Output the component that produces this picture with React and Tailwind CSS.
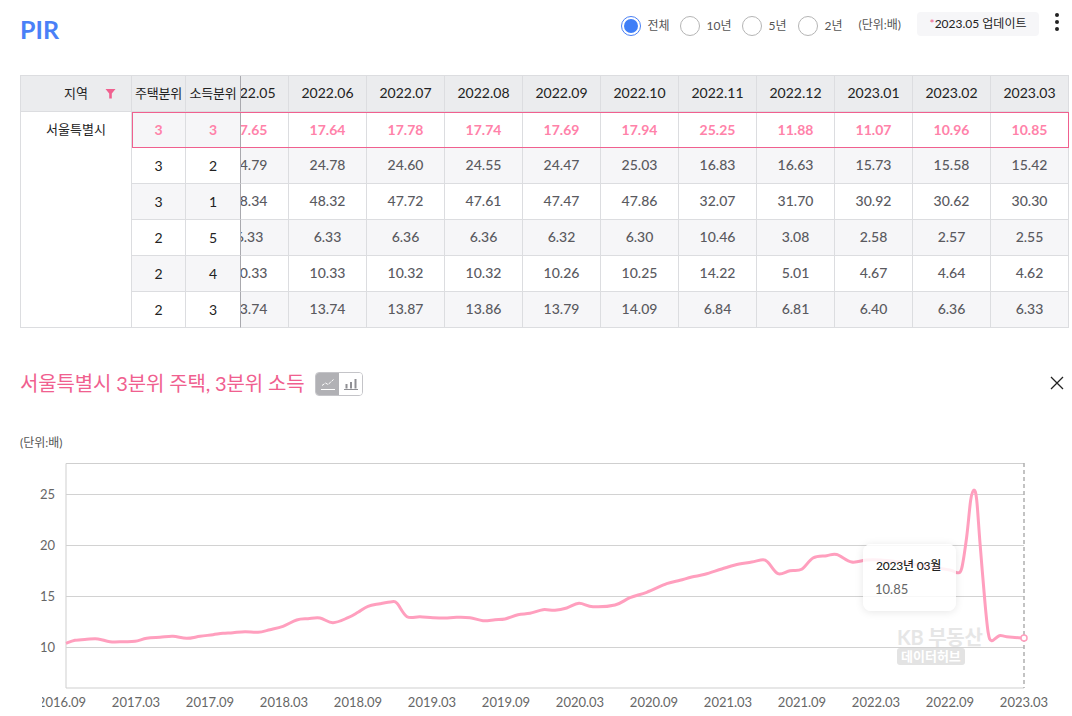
import React from 'react';

const FONT = 'font-["Lato","Noto_Sans_CJK_KR",sans-serif]';

const months = ['2022.05', '2022.06', '2022.07', '2022.08', '2022.09', '2022.10', '2022.11', '2022.12', '2023.01', '2023.02', '2023.03'];

const rows = [
  { house: 3, income: 3, values: ['17.65', '17.64', '17.78', '17.74', '17.69', '17.94', '25.25', '11.88', '11.07', '10.96', '10.85'] },
  { house: 3, income: 2, values: ['24.79', '24.78', '24.60', '24.55', '24.47', '25.03', '16.83', '16.63', '15.73', '15.58', '15.42'] },
  { house: 3, income: 1, values: ['48.34', '48.32', '47.72', '47.61', '47.47', '47.86', '32.07', '31.70', '30.92', '30.62', '30.30'] },
  { house: 2, income: 5, values: ['6.33', '6.33', '6.36', '6.36', '6.32', '6.30', '10.46', '3.08', '2.58', '2.57', '2.55'] },
  { house: 2, income: 4, values: ['10.33', '10.33', '10.32', '10.32', '10.26', '10.25', '14.22', '5.01', '4.67', '4.64', '4.62'] },
  { house: 2, income: 3, values: ['13.74', '13.74', '13.87', '13.86', '13.79', '14.09', '6.84', '6.81', '6.40', '6.36', '6.33'] },
];

const linePoints = [
  [66, 643.3], [75, 640.3], [86.7, 639.3], [98, 639], [110, 641.7], [123, 641.7], [135, 641.3], [146.7, 638.3],
  [160, 637.3], [173, 636.3], [186.7, 638.3], [200, 636.3], [213, 634.7], [223, 633.3], [233, 632.7], [245, 631.7],
  [258, 632.3], [270, 629.7], [283, 626.3], [296.7, 620], [308, 618.7], [320, 618], [333, 622.7], [348, 617.7],
  [358, 612.3], [368, 606.3], [380, 603.7], [392, 601.7], [397, 603.3], [407, 616.7], [420, 616.7], [433, 617.7],
  [445, 618], [456.7, 617.3], [470, 617.7], [483, 620.7], [495, 619.7], [505, 619], [518, 614.7], [530, 613.3],
  [543, 609.7], [555, 610.3], [566.7, 608], [579, 603.3], [593, 606.7], [615, 605], [630, 597.7], [646.7, 592.3],
  [666.7, 583.7], [680, 580.3], [691.7, 577], [705, 574.3], [721.7, 569], [735, 565], [751.7, 562], [763, 559.7],
  [768, 562.3], [778, 573.7], [790, 570.7], [801.7, 569.3], [813, 558], [826.7, 555.7], [836.7, 554.5], [851.7, 562],
  [866.7, 560], [880, 560], [900, 562], [925, 566], [950, 570], [957.3, 572.7], [961.7, 568.3], [966.7, 536.7],
  [970.7, 500], [974, 490], [976.7, 500], [980, 543], [985, 603], [988.3, 633.3], [991.7, 640.7], [999.3, 635.7],
  [1006.7, 636.7], [1024, 638.3],
];

// catmull-rom through the traced points
function smoothPath(pts) {
  let d = `M${pts[0][0]} ${pts[0][1]}`;
  for (let i = 0; i < pts.length - 1; i++) {
    const p0 = pts[Math.max(i - 1, 0)];
    const p1 = pts[i];
    const p2 = pts[i + 1];
    const p3 = pts[Math.min(i + 2, pts.length - 1)];
    const c1x = p1[0] + (p2[0] - p0[0]) / 6;
    const c1y = p1[1] + (p2[1] - p0[1]) / 6;
    const c2x = p2[0] - (p3[0] - p1[0]) / 6;
    const c2y = p2[1] - (p3[1] - p1[1]) / 6;
    d += ` C${c1x.toFixed(1)} ${c1y.toFixed(1)} ${c2x.toFixed(1)} ${c2y.toFixed(1)} ${p2[0]} ${p2[1]}`;
  }
  return d;
}

const xLabels = ['2016.09', '2017.03', '2017.09', '2018.03', '2018.09', '2019.03', '2019.09', '2020.03', '2020.09', '2021.03', '2021.09', '2022.03', '2022.09', '2023.03'];
const yTicks = [[25, 494], [20, 545], [15, 596], [10, 647]];

function Radio({ label, checked, className }) {
  return (
    <div className={`flex items-center gap-[6px] ${className}`}>
      {checked ? (
        <span className="flex h-5 w-5 items-center justify-center rounded-full border border-[#4a80f5]">
          <span className="h-[14px] w-[14px] rounded-full bg-[#3f7ef7]" />
        </span>
      ) : (
        <span className="h-5 w-5 rounded-full border border-[#b5b5b5]" />
      )}
      <span className="text-[12px] text-[#555]">{label}</span>
    </div>
  );
}

function Chart() {
  return (
    <div className="relative mt-[3px] ml-[-20px] h-[262px] w-[1072px]">
      <svg className="block" width="1072" height="262" viewBox="0 455 1072 262">
        <defs>
          <clipPath id="labels">
            <rect x="42" y="455" width="1030" height="262" />
          </clipPath>
        </defs>
        <path d="M66 688V463.5H1024" fill="none" stroke="#cfcfcf" />
        <path d="M66 688H1024" fill="none" stroke="#cfcfcf" />
        {yTicks.map(([v, y]) => (
          <g key={v}>
            <line x1="66" x2="1024" y1={y + 0.5} y2={y + 0.5} stroke="#d2d2d2" />
            <text x="55" y={y + 5} textAnchor="end" fontSize="13" fill="#666" fontFamily="Lato, sans-serif">{v}</text>
          </g>
        ))}
        <line x1="1024" x2="1024" y1="463" y2="688" stroke="#b0b0b0" strokeWidth="1.5" strokeDasharray="4 3" />
        <path d={smoothPath(linePoints)} fill="none" stroke="#ff9fbe" strokeWidth="3" strokeLinejoin="round" />
        <circle cx="1024" cy="638" r="3" fill="#fff" stroke="#ff9fbe" strokeWidth="1.5" />
        <g clipPath="url(#labels)">
          {xLabels.map((l, i) => (
            <text key={l} x={62 + i * 74} y="707" textAnchor="middle" fontSize="13" fill="#666" fontFamily="Lato, sans-serif">{l}</text>
          ))}
        </g>
      </svg>

      {/* watermark */}
      <div className="absolute left-[897px] top-[170px] flex flex-col items-start">
        <span className="text-[20px] leading-[24px] font-bold tracking-[-0.2px] text-[#e6e6e6]">KB 부동산</span>
        <span className="mt-[-1px] rounded-[3px] bg-[#e3e3e3] px-1 text-[13px] leading-[17px] font-bold text-white">데이터허브</span>
      </div>

      {/* tooltip */}
      <div className="absolute left-[863px] top-[89px] h-[67px] w-[93px] rounded-[8px] bg-white/85 pl-[13px] pt-[13px] shadow-[0_1px_8px_rgba(0,0,0,0.1)]">
        <p className="text-[12px] leading-[18px] font-medium tracking-[-0.2px] text-[#222]">2023년 03월</p>
        <p className="mt-[5px] ml-[-1px] text-[13px] leading-[18px] text-[#666]">10.85</p>
      </div>
    </div>
  );
}

export default function App() {
  return (
    <div className={`h-[716px] w-[1072px] overflow-hidden bg-white pl-5 ${FONT}`}>
      <div className="relative flex h-[75px] w-[1048px] items-start">
        <h1 className="mt-[11px] text-[25px] leading-[36px] font-bold text-[#4a80f7]">PIR</h1>
        <div className="ml-auto mt-[12px] flex h-6 items-center pr-[29px]">
          <Radio label="전체" checked className="mr-[11px] mt-1" />
          <Radio label="10년" className="mr-[11px] mt-1" />
          <Radio label="5년" className="mr-3 mt-1" />
          <Radio label="2년" className="mr-[16px] mt-1" />
          <span className="mr-4 mt-[1px] text-[12px] text-[#555]">(단위:배)</span>
          <div className="flex h-6 w-[122px] items-center justify-center rounded-[4px] bg-[#f6f6f8] text-[12px] text-[#222]">
            <span className="text-[#f0608f]">*</span>2023.05 업데이트
          </div>
        </div>
        <div className="absolute right-[9px] top-[13px] flex flex-col gap-[3px]">
          <span className="h-1 w-1 rounded-full bg-[#222]" />
          <span className="h-1 w-1 rounded-full bg-[#222]" />
          <span className="h-1 w-1 rounded-full bg-[#222]" />
        </div>
      </div>

      <div className="relative flex w-[1049px] border-t border-l border-[#dcdde0] text-[14px]">
        <div className="grid w-[220px] shrink-0 grid-cols-[111px_54px_55px] grid-rows-[repeat(7,36px)] text-[13px] text-[#222]">
          <div className="flex items-center justify-center border-r border-b border-[#dcdde0] bg-[#ebecee] pl-[28px]">
            <span>지역</span>
            <svg className="ml-[17px]" width="11" height="11" viewBox="0 0 11 11">
              <path d="M0.5 1H10.5L6.8 5.5V10.5H4.2V5.5Z" fill="#f0608f" />
            </svg>
          </div>
          <div className="flex items-center justify-center border-r border-b border-[#dcdde0] bg-[#ebecee] tracking-[-0.2px]">주택분위</div>
          <div className="flex items-center justify-center border-r border-b border-[#dcdde0] border-r-[#a9a9ae] bg-[#ebecee] tracking-[-0.2px]">소득분위</div>
          <div className="row-span-6 border-r border-b border-[#dcdde0] bg-white pt-[8px] text-center text-[13px] leading-[18px]">서울특별시</div>
          {rows.map((r, i) => {
            const gray = i % 2 === 0;
            const bg = gray ? 'bg-[#f6f6f8]' : 'bg-white';
            const txt = i === 0 ? 'font-bold text-[#ff82a9] text-[14px]' : 'text-[14px] text-[#222]';
            return (
              <React.Fragment key={i}>
                <div className={`flex items-center justify-center border-r border-b border-[#dcdde0] ${bg} ${txt}`}>{r.house}</div>
                <div className={`flex items-center justify-center border-r border-b border-r-[#a9a9ae] border-b-[#dcdde0] ${bg} ${txt}`}>{r.income}</div>
              </React.Fragment>
            );
          })}
        </div>

        <div className="w-[828px] overflow-hidden">
          <div className="ml-[-30px] grid w-[858px] grid-cols-[repeat(11,78px)] grid-rows-[repeat(7,36px)]">
            {months.map((m) => (
              <div key={m} className="flex items-center justify-center border-r border-b border-[#dcdde0] bg-[#ebecee] pb-[2px] text-[#222]">{m}</div>
            ))}
            {rows.map((r, i) =>
              r.values.map((v, j) => {
                const bg = i % 2 === 0 ? 'bg-white' : 'bg-[#f6f6f8]';
                const txt = i === 0 ? 'font-bold text-[#ff82a9]' : 'pb-[2px] font-medium text-[#5a5a5f]';
                return (
                  <div key={j} className={`flex items-center justify-center border-r border-b border-[#dcdde0] ${bg} ${txt}`}>{v}</div>
                );
              })
            )}
          </div>
        </div>

        {/* selected row */}
        <div className="pointer-events-none absolute left-[111px] top-[36px] h-9 w-[937px] border border-[#f0608f]" />
      </div>

      <div className="mt-[44px] flex h-6 w-[1048px] items-center">
        <h2 className="mb-[2px] text-[20px] font-normal tracking-[-0.15px] text-[#f0608f]">서울특별시 3분위 주택, 3분위 소득</h2>
        <div className="ml-[11px] flex h-6 w-12 overflow-hidden rounded-[4px] border border-[#c4c4c8]">
          <span className="flex flex-1 items-center justify-center bg-[#b1b1b5]">
            <svg width="14" height="12" viewBox="0 0 14 12" fill="none" stroke="#fff" strokeWidth="1">
              <path d="M1 7.5L4.5 5L7 6.5L12.5 1.5" strokeDasharray="3 1" />
              <path d="M0 11.5H14" />
            </svg>
          </span>
          <span className="flex flex-1 items-center justify-center bg-white">
            <svg width="14" height="12" viewBox="0 0 14 12" fill="#8f8f94">
              <rect x="1.5" y="6" width="2" height="4.5" />
              <rect x="6" y="4" width="2" height="6.5" />
              <rect x="10.5" y="1" width="2" height="9.5" />
              <rect y="11" width="14" height="1" />
            </svg>
          </span>
        </div>
        <svg className="ml-auto mr-[4px] mb-[2px]" width="14" height="14" viewBox="0 0 14 14" stroke="#222" strokeWidth="1.3">
          <path d="M1 1L13 13M13 1L1 13" />
        </svg>
      </div>

      <p className="mt-[38px] text-[12px] leading-[18px] text-[#555]">(단위:배)</p>

      <Chart />
    </div>
  );
}
